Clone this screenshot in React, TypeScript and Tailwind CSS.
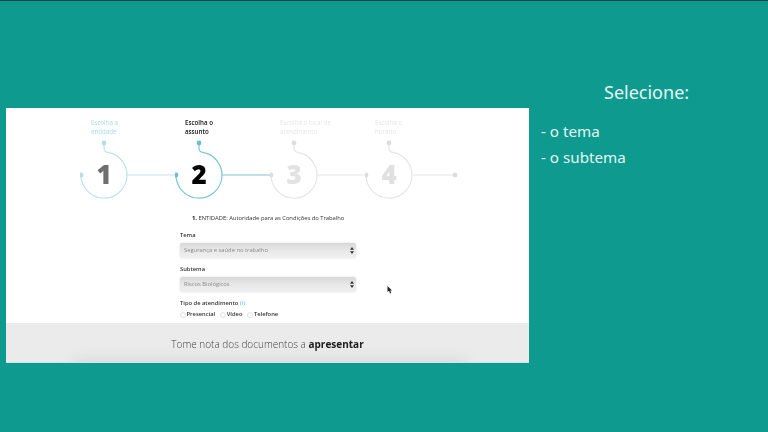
import React from 'react';

const steps = [
  { n: '1', label: ['Escolha a', 'entidade'], text: 'text-[#a5dce6]', stroke: '#bfe4e8', node: '#b4dde4', num: 'text-[#6f6f6f]', labelPad: 'pl-[11px]' },
  { n: '2', label: ['Escolha o', 'assunto'], text: 'text-[#111111] font-semibold', stroke: '#7cc8d4', node: '#6fbccb', num: 'text-black', labelPad: 'pl-[10px]' },
  { n: '3', label: ['Escolha o local de', 'atendimento'], text: 'text-[#e6e6e6]', stroke: '#e6e6e6', node: '#dddddd', num: 'text-[#e2e2e2]', labelPad: 'pl-[10px]' },
  { n: '4', label: ['Escolha o', 'horário'], text: 'text-[#e6e6e6]', stroke: '#e6e6e6', node: '#dddddd', num: 'text-[#e0e0e0]', labelPad: 'pl-[10px]' },
];

const Step = ({ step, last }: { step: (typeof steps)[number]; last: boolean }) => (
  <div className="w-[95px] shrink-0">
    <div className={`h-[20px] text-[6.2px] leading-[9px] ${step.labelPad} ${step.text}`}>
      {step.label.map(line => (
        <div key={line} className="whitespace-nowrap">{line}</div>
      ))}
    </div>
    <div className="relative h-[62px] w-[95px]">
      <svg width="95" height="62" viewBox="0 0 95 62" fill="none" className="block">
        <path d="M24 5 V10 Q24 14 28 14.4 A23 23 0 1 1 1 37" stroke={step.stroke} strokeWidth="1.2" />
        <path d={last ? 'M47 37 H90' : 'M47 37 H95'} stroke={step.stroke} strokeWidth="1.2" />
        <circle cx="24" cy="5" r="2.4" fill={step.node} />
        <circle cx="1" cy="37" r="2.4" fill={step.node} />
        {last && <circle cx="90" cy="37" r="2.4" fill={step.node} />}
      </svg>
      <div className={`absolute left-[1px] top-[21px] w-[46px] text-center text-[26px] font-extrabold leading-[30px] ${step.num}`}>
        {step.n}
      </div>
    </div>
  </div>
);

const FakeSelect = ({ value }: { value: string }) => (
  <div className="flex h-[15px] w-[176px] items-center justify-between rounded-[2px] bg-gradient-to-b from-[#d8d8d8] via-[#e8e8e8] to-[#f0f0f0] pl-[4px] pr-[2px] text-[5.8px] text-[#8a8a8a] shadow-[0_0_2px_rgba(0,0,0,0.15)]">
    <span>{value}</span>
    <svg width="4" height="7" viewBox="0 0 4 7" fill="#333333">
      <path d="M2 0 L4 2.8 H0 Z M2 7 L0 4.2 H4 Z" />
    </svg>
  </div>
);

const Radio = ({ label }: { label: string }) => (
  <div className="flex items-center gap-[0.5px]">
    <span className="h-[6px] w-[6px] rounded-full border border-[#e2e2e2] bg-white" />
    <span className="font-semibold">{label}</span>
  </div>
);

export default function App() {
  return (
    <div className="h-[432px] w-[768px] overflow-hidden border-t border-[#12444c] bg-[#0f9a90] font-['Open_Sans',sans-serif]">
      <div className="flex pl-[6px] pt-[107px]">
        <div className="relative h-[255px] w-[523px] shrink-0 bg-white">
          <div className="pl-[74px] pt-[10px] blur-[0.4px]">
            <div className="flex">
              {steps.map((step, i) => (
                <Step key={step.n} step={step} last={i === steps.length - 1} />
              ))}
            </div>
          </div>

          <div className="pl-[174px] pt-[14px] text-[5.8px] text-[#333333] blur-[0.3px]">
            <div className="pl-[12px] leading-[9px]">
              <b className="font-bold text-[#111111]">1.</b> ENTIDADE: Autoridade para as Condições do Trabalho
            </div>
            <div className="mt-[8px] font-semibold leading-[9px]">Tema</div>
            <div className="mt-[3px]"><FakeSelect value="Segurança e saúde no trabalho" /></div>
            <div className="mt-[7px] font-semibold leading-[9px]">Subtema</div>
            <div className="mt-[3px]"><FakeSelect value="Riscos Biológicos" /></div>
            <div className="mt-[7px] font-semibold leading-[9px]">
              Tipo de atendimento <span className="text-[#7cc8d4]">(i)</span>
            </div>
            <div className="mt-[2px] flex gap-[5px] leading-[9px]">
              <Radio label="Presencial" />
              <Radio label="Vídeo" />
              <Radio label="Telefone" />
            </div>
          </div>

          <div className="absolute inset-x-0 bottom-0 h-[40px] overflow-hidden border-b border-[#c8e8e6] bg-[#ebebeb]">
            <div className="pt-[13px] text-center text-[10px] leading-[16px] font-light text-[#444444] blur-[0.2px]">
              Tome nota dos documentos a <b className="font-bold text-[#1a1a1a]">apresentar</b>
            </div>
            <div className="absolute bottom-[-8px] left-[66px] h-[12px] w-[395px] rounded-full bg-[#dcdcdc] blur-[6px]" />
          </div>

          <svg width="6" height="8" viewBox="0 0 6 8" fill="#222222" className="absolute left-[381px] top-[178px]">
            <path d="M0.5 0 V6 L2 4.8 L3.2 7.5 L4.3 7 L3.2 4.5 H5 Z" />
          </svg>
        </div>

        <div className="w-[239px] pl-[12px] font-['Noto_Sans',sans-serif] text-[#e4f6f3]">
          <div className="mt-[-29px] pl-[63px] text-[18px] leading-[26px]">Selecione:</div>
          <div className="mt-[13px] text-[15.2px] leading-[26px]">- o tema</div>
          <div className="text-[15.2px] leading-[26px]">- o subtema</div>
        </div>
      </div>
    </div>
  );
}
